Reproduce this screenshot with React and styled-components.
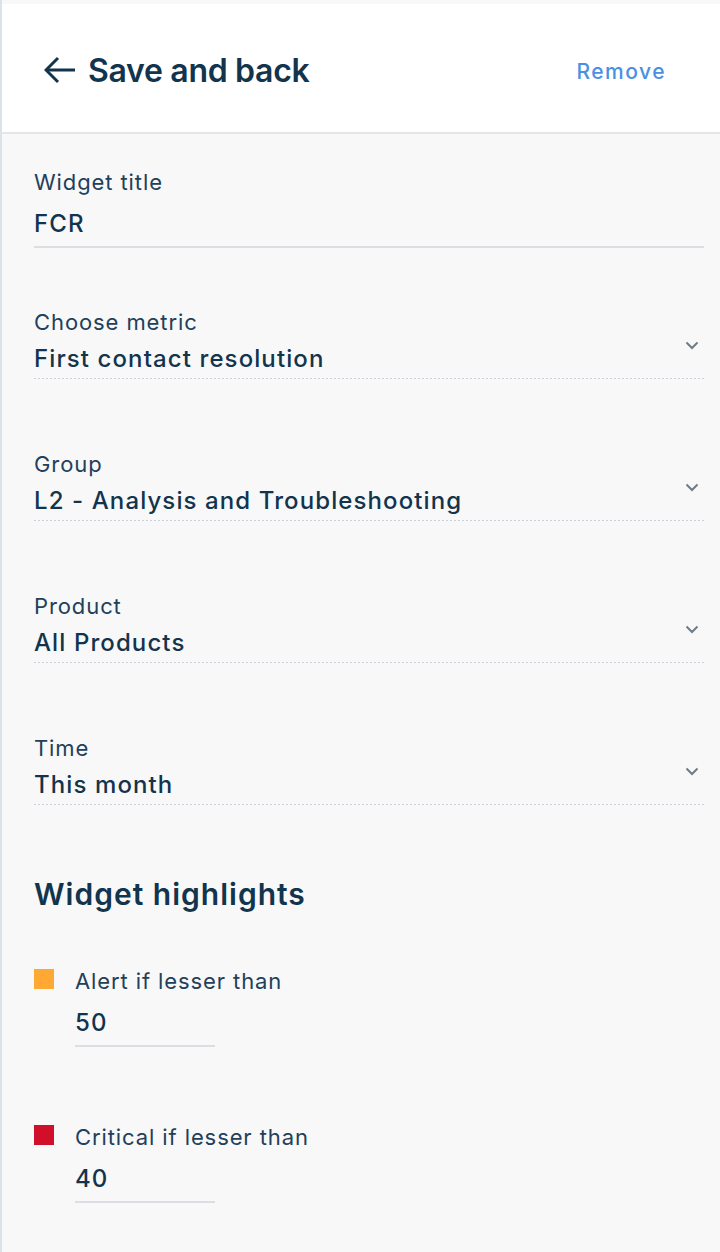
import React from "react";
import styled, { createGlobalStyle } from "styled-components";

const Global = createGlobalStyle`
  html, body { margin: 0; padding: 0; background: #f8f8f8; }
  body { font-family: Inter, "Noto Sans", "Liberation Sans", sans-serif; color: #12344d; }
  * { box-sizing: border-box; }
`;

const Panel = styled.div`
  min-height: 1252px;
  border-left: 2px solid #dde2e7;
  padding-top: 4px;
  background: #f8f8f8;
  display: flex;
  flex-direction: column;
`;

const Header = styled.header`
  height: 130px;
  background: #ffffff;
  border-bottom: 2px solid #e4e7ea;
  display: flex;
  align-items: center;
  justify-content: space-between;
  padding: 4px 54px 0 42px;
`;

const BackButton = styled.button`
  display: flex;
  align-items: center;
  gap: 12px;
  border: 0;
  background: none;
  padding: 0;
  cursor: pointer;
  font-family: inherit;
  font-size: 32px;
  font-weight: 600;
  letter-spacing: -0.3px;
  color: #12344d;
`;

const RemoveLink = styled.button`
  border: 0;
  background: none;
  padding: 0;
  margin-top: 3px;
  font-family: inherit;
  font-size: 21px;
  font-weight: 500;
  letter-spacing: 1.5px;
  color: #4a90e2;
  cursor: pointer;
`;

const Body = styled.main`
  display: flex;
  flex-direction: column;
  padding: 34px 16px 0 32px;
`;

const Field = styled.div`
  display: flex;
  align-items: center;
  margin-bottom: ${(p) => p.$gap || 0}px;
  ${(p) =>
    p.$select
      ? `background-image: linear-gradient(to right, #c9d2db 50%, transparent 50%);
         background-size: 4px 1px;
         background-repeat: repeat-x;
         background-position: left bottom;
         padding-bottom: 5px;`
      : `border-bottom: 2px solid #dbdfe3;
         padding-bottom: 7px;`}
`;

const FieldText = styled.div`
  flex: 1;
  display: flex;
  flex-direction: column;
  gap: ${(p) => p.$gap}px;
`;

const Label = styled.div`
  font-size: 22px;
  line-height: 28px;
  font-weight: 400;
  letter-spacing: 0.9px;
  color: #22405a;
`;

const Value = styled.div`
  font-size: 24px;
  line-height: 30px;
  font-weight: 500;
  letter-spacing: 1.1px;
  color: #12344d;
`;

const Chevron = styled.svg`
  width: 14px;
  height: 9px;
  margin-right: 5px;
  margin-top: 8px;
  flex: none;
`;

const Heading = styled.h2`
  margin: 0 0 55px;
  font-size: 30px;
  line-height: 36px;
  font-weight: 600;
  letter-spacing: 1px;
  color: #12344d;
`;

const Highlight = styled.div`
  display: flex;
  align-items: flex-start;
  gap: 21px;
  margin-bottom: ${(p) => p.$gap || 0}px;
`;

const Swatch = styled.span`
  width: 20px;
  height: 20px;
  margin-top: 2px;
  background: ${(p) => p.$color};
  flex: none;
`;

const HighlightBody = styled.div`
  display: flex;
  flex-direction: column;
  gap: 13px;
`;

const ShortInput = styled.div`
  width: 140px;
  padding-bottom: 7px;
  border-bottom: 2px solid #dbdfe3;
`;

function ChevronDown() {
  return (
    <Chevron viewBox="0 0 14 9" fill="none">
      <path d="M1.5 1.5 L7 7 L12.5 1.5" stroke="#6f7c87" strokeWidth="2" />
    </Chevron>
  );
}

function ArrowLeft() {
  return (
    <svg width="32" height="28" viewBox="0 0 32 28" fill="none">
      <path d="M31 14 H3" stroke="#12344d" strokeWidth="3" />
      <path d="M14 2 L2 14 L14 26" stroke="#12344d" strokeWidth="3" />
    </svg>
  );
}

const selects = [
  { label: "Choose metric", value: "First contact resolution" },
  { label: "Group", value: "L2 - Analysis and Troubleshooting" },
  { label: "Product", value: "All Products" },
  { label: "Time", value: "This month" },
];

const highlights = [
  { label: "Alert if lesser than", value: "50", color: "#ffa934", gap: 76 },
  { label: "Critical if lesser than", value: "40", color: "#d0102a", gap: 0 },
];

export default function App() {
  return (
    <>
      <Global />
      <Panel>
        <Header>
          <BackButton>
            <ArrowLeft />
            Save and back
          </BackButton>
          <RemoveLink>Remove</RemoveLink>
        </Header>
        <Body>
          <Field $gap={60}>
            <FieldText $gap={13}>
              <Label>Widget title</Label>
              <Value>FCR</Value>
            </FieldText>
          </Field>
          {selects.map((s) => (
            <Field key={s.label} $select $gap={71}>
              <FieldText $gap={8}>
                <Label>{s.label}</Label>
                <Value>{s.value}</Value>
              </FieldText>
              <ChevronDown />
            </Field>
          ))}
          <Heading>Widget highlights</Heading>
          {highlights.map((h) => (
            <Highlight key={h.label} $gap={h.gap}>
              <Swatch $color={h.color} />
              <HighlightBody>
                <Label>{h.label}</Label>
                <ShortInput>
                  <Value>{h.value}</Value>
                </ShortInput>
              </HighlightBody>
            </Highlight>
          ))}
        </Body>
      </Panel>
    </>
  );
}
